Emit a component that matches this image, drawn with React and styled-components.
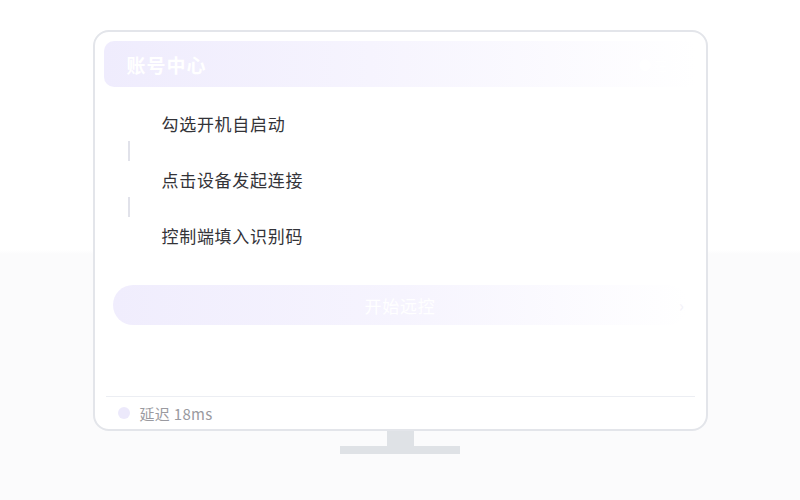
import React from 'react';
import styled, { createGlobalStyle } from 'styled-components';

const GlobalStyle = createGlobalStyle`
  html, body {
    margin: 0;
    padding: 0;
  }
  body {
    font-family: "Noto Sans CJK SC", "Noto Sans", sans-serif;
    background: linear-gradient(180deg, #ffffff 0, #ffffff 250px, #fbfbfc 254px, #fbfbfc 100%);
    min-height: 500px;
  }
`;

const steps = ['勾选开机自启动', '点击设备发起连接', '控制端填入识别码'];

export default function App() {
  return (
    <>
      <GlobalStyle />
      <Page>
        <Monitor>
          <Header>
            <Title>账号中心</Title>
            <Status>● 在线</Status>
          </Header>
          <StepList>
            {steps.map((text, i) => (
              <React.Fragment key={text}>
                {i > 0 && <Connector />}
                <Step>
                  <Marker />
                  <StepText>{text}</StepText>
                </Step>
              </React.Fragment>
            ))}
          </StepList>
          <StartButton>
            开始远控
            <Chevron>›</Chevron>
          </StartButton>
          <Spacer />
          <Footer>
            <Dot />
            <Latency>延迟 18ms</Latency>
          </Footer>
        </Monitor>
        <Neck />
        <Base />
      </Page>
    </>
  );
}

const Page = styled.div`
  display: flex;
  flex-direction: column;
  align-items: center;
  padding-top: 30px;
  height: 500px;
  box-sizing: border-box;
`;

const Monitor = styled.div`
  width: 615px;
  height: 401px;
  box-sizing: border-box;
  border: 2px solid #e3e5ea;
  border-radius: 16px;
  background: #ffffff;
  display: flex;
  flex-direction: column;
  padding: 9px 9px 0;
`;

const Header = styled.div`
  height: 46px;
  border-radius: 10px;
  background: linear-gradient(90deg, #efecfd 0%, #f6f4fe 45%, #ffffff 100%);
  display: flex;
  align-items: center;
  justify-content: space-between;
  padding: 0 16px 0 23px;
  flex-shrink: 0;
`;

const Title = styled.div`
  color: #ffffff;
  font-size: 19px;
  font-weight: 700;
  letter-spacing: 1px;
`;

const Status = styled.div`
  color: #ffffff;
  font-size: 13px;
`;

const StepList = styled.div`
  display: flex;
  flex-direction: column;
  margin-top: 18px;
  padding-left: 13px;
`;

const Step = styled.div`
  display: flex;
  align-items: center;
  height: 36px;
  gap: 21px;
`;

const Marker = styled.div`
  width: 24px;
  height: 24px;
  border-radius: 50%;
  background: #ffffff;
  flex-shrink: 0;
`;

const Connector = styled.div`
  width: 2px;
  height: 20px;
  margin-left: 11px;
  background: #e1e2ea;
`;

const StepText = styled.span`
  font-size: 17px;
  letter-spacing: 0.7px;
  color: #333338;
`;

const StartButton = styled.div`
  position: relative;
  margin: 32px 9px 0;
  height: 40px;
  border-radius: 20px;
  background: linear-gradient(90deg, #f0edfd 0%, #f6f4fe 50%, #ffffff 100%);
  display: flex;
  align-items: center;
  justify-content: center;
  color: #ffffff;
  font-size: 17px;
  letter-spacing: 0.7px;
  flex-shrink: 0;
`;

const Chevron = styled.span`
  position: absolute;
  right: 3px;
  top: 50%;
  transform: translateY(-52%);
  color: #f2f1f8;
  font-size: 16px;
`;

const Spacer = styled.div`
  flex: 1;
`;

const Footer = styled.div`
  height: 32px;
  border-top: 1px solid #eceef3;
  margin: 0 2px;
  display: flex;
  align-items: center;
  gap: 10px;
  padding-left: 12px;
`;

const Dot = styled.div`
  width: 12px;
  height: 12px;
  border-radius: 50%;
  background: #ece9fb;
`;

const Latency = styled.span`
  font-size: 15px;
  letter-spacing: 0.3px;
  color: #9a9aa0;
`;

const Neck = styled.div`
  width: 27px;
  height: 15px;
  background: #dfe2e6;
`;

const Base = styled.div`
  width: 120px;
  height: 8px;
  background: #dfe2e6;
`;
